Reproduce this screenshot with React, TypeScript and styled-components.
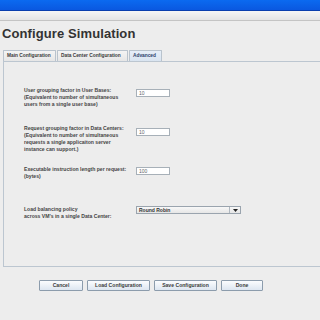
import React from 'react';
import styled, { createGlobalStyle } from 'styled-components';

const GlobalStyle = createGlobalStyle`
  html, body {
    margin: 0;
    padding: 0;
    background: #ededed;
  }
  body {
    width: 320px;
    height: 320px;
    overflow: hidden;
    font-family: "Liberation Sans", Arial, sans-serif;
  }
`;

const Window = styled.div`
  width: 320px;
  height: 320px;
  display: flex;
  flex-direction: column;
  background: #ededed;
`;

const TitleBar = styled.div`
  height: 10px;
  background: linear-gradient(#0b6af0, #0a58e0);
  border-bottom: 1px solid #0a3fae;
`;

const MenuStrip = styled.div`
  height: 9px;
  background: linear-gradient(#f6f6f6, #e4e4e4);
  border-bottom: 1px solid #c4c4c4;
`;

const Heading = styled.h1`
  margin: 5px 0 0 2px;
  height: 24px;
  font-size: 13px;
  line-height: 16px;
  font-weight: bold;
  color: #333;
  letter-spacing: 0.1px;
`;

const TabStrip = styled.div`
  display: flex;
  padding-left: 3px;
  height: 11px;
`;

const Tab = styled.div<{ $active?: boolean; $width: number }>`
  width: ${(p) => p.$width}px;
  box-sizing: border-box;
  margin-right: 1px;
  border: 1px solid #b9c3cd;
  border-bottom: none;
  border-radius: 1px 1px 0 0;
  background: ${(p) => (p.$active ? 'linear-gradient(#e6eef8, #d9e4f0)' : 'linear-gradient(#f4f4f4, #e6e6e6)')};
  font-size: 4.8px;
  font-weight: bold;
  color: ${(p) => (p.$active ? '#2c3e6a' : '#3a3a3a')};
  line-height: 10px;
  padding-left: 3px;
  white-space: nowrap;
  overflow: hidden;
`;

const TabPanel = styled.div`
  margin-left: 3px;
  height: 206px;
  box-sizing: border-box;
  border: 1px solid #bcc6d0;
  border-right: none;
  padding: 25px 0 0 20px;
`;

const FieldRow = styled.div<{ $height: number }>`
  display: grid;
  grid-template-columns: 112px auto;
  align-items: start;
  height: ${(p) => p.$height}px;
`;

const Label = styled.div`
  font-size: 5.1px;
  line-height: 7px;
  font-weight: bold;
  color: #444;
  white-space: nowrap;
`;

const TextInput = styled.div<{ $offset: number }>`
  margin-top: ${(p) => p.$offset}px;
  width: 34px;
  height: 8px;
  box-sizing: border-box;
  background: #fff;
  border: 1px solid #a7b0b8;
  font-size: 5px;
  line-height: 6px;
  color: #666;
  padding-left: 2px;
`;

const Select = styled.div`
  width: 105px;
  height: 8px;
  box-sizing: border-box;
  display: flex;
  background: linear-gradient(#f8f8f8, #e6e6e6);
  border: 1px solid #9aa4ae;
  font-size: 5px;
  line-height: 6px;
  font-weight: bold;
  color: #333;
`;

const SelectValue = styled.div`
  flex: 1;
  padding-left: 2px;
`;

const SelectArrow = styled.div`
  width: 10px;
  border-left: 1px solid #b0b8c0;
  display: flex;
  align-items: center;
  justify-content: center;
`;

const ButtonBar = styled.div`
  display: flex;
  padding: 13px 0 0 39px;
  gap: 4px;
`;

const Button = styled.div<{ $width: number }>`
  width: ${(p) => p.$width}px;
  height: 11px;
  box-sizing: border-box;
  border: 1px solid #8c9cac;
  border-radius: 1px;
  background: linear-gradient(#fbfcfe, #dde6f0);
  font-size: 5.1px;
  font-weight: bold;
  color: #3a3a3a;
  line-height: 9px;
  text-align: center;
`;

const fields = [
  {
    lines: ['User grouping factor in User Bases:', '(Equivalent to number of simultaneous', 'users from a single user base)'],
    value: '10',
    offset: 2,
    height: 38,
  },
  {
    lines: [
      'Request grouping factor in Data Centers:',
      '(Equivalent to number of simultaneous',
      'requests a single applicaiton server',
      'instance can support.)',
    ],
    value: '10',
    offset: 3,
    height: 41,
  },
  {
    lines: ['Executable instruction length per request:', '(bytes)'],
    value: '100',
    offset: 1,
    height: 40,
  },
];

const App: React.FC = () => {
  return (
    <Window>
      <GlobalStyle />
      <TitleBar />
      <MenuStrip />
      <Heading>Configure Simulation</Heading>
      <TabStrip>
        <Tab $width={53}>Main Configuration</Tab>
        <Tab $width={71}>Data Center Configuration</Tab>
        <Tab $width={33} $active>Advanced</Tab>
      </TabStrip>
      <TabPanel>
        {fields.map((field) => (
          <FieldRow key={field.lines[0]} $height={field.height}>
            <Label>
              {field.lines.map((line) => (
                <div key={line}>{line}</div>
              ))}
            </Label>
            <TextInput $offset={field.offset}>{field.value}</TextInput>
          </FieldRow>
        ))}
        <FieldRow $height={20}>
          <Label>
            <div>Load balancing policy</div>
            <div>across VM's in a single Data Center:</div>
          </Label>
          <Select>
            <SelectValue>Round Robin</SelectValue>
            <SelectArrow>
              <svg width="5" height="3" viewBox="0 0 5 3">
                <path d="M0 0 L5 0 L2.5 3 Z" fill="#222" />
              </svg>
            </SelectArrow>
          </Select>
        </FieldRow>
      </TabPanel>
      <ButtonBar>
        <Button $width={44}>Cancel</Button>
        <Button $width={63}>Load Configuration</Button>
        <Button $width={63}>Save Configuration</Button>
        <Button $width={42}>Done</Button>
      </ButtonBar>
    </Window>
  );
};

export default App;
